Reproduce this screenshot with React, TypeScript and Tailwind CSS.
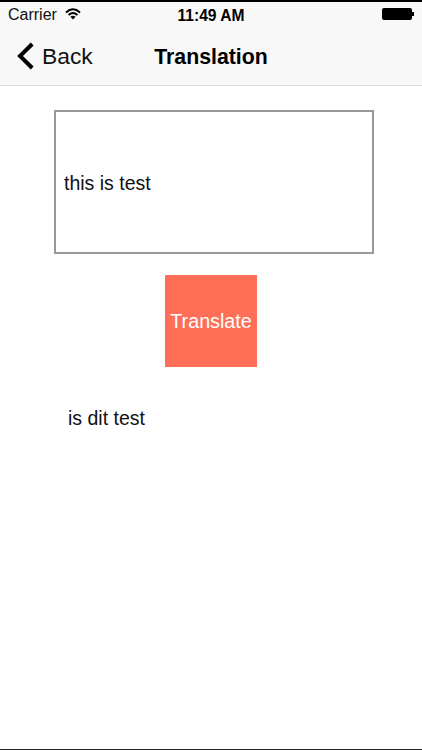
export default function App() {
  return (
    <div className="w-[422px] h-[750px] bg-white flex flex-col overflow-hidden font-['Liberation_Sans',Arial,sans-serif] text-black">
      <div className="h-[86px] shrink-0 bg-[#f8f8f8] border-t-[2px] border-t-black border-b border-b-[#dcdcdc] flex flex-col">
        <div className="h-[27px] shrink-0 relative flex items-center justify-center">
          <div className="absolute left-[8px] top-[3px] flex items-center gap-[8px]">
            <span className="text-[16px] leading-[20px] text-[#111]">Carrier</span>
            <svg width="16" height="12" viewBox="0 0 16 12" className="mt-[-3px]">
              <path d="M1 4.4 Q8 -1.8 15 4.4" fill="none" stroke="#000" strokeWidth="2" />
              <path d="M3.6 7 Q8 3 12.4 7" fill="none" stroke="#000" strokeWidth="2" />
              <path d="M5.4 8.8 Q8 6.8 10.6 8.8 L8 11.6 Z" fill="#000" />
            </svg>
          </div>
          <span className="text-[15.6px] leading-[20px] font-bold">11:49 AM</span>
          <div className="absolute left-[382px] top-[6px] flex items-center">
            <div className="w-[30px] h-[12px] bg-black rounded-[2px]" />
            <div className="w-[2px] h-[4px] bg-black" />
          </div>
        </div>
        <div className="flex-1 relative flex items-center justify-center">
          <div className="absolute left-[17px] top-[13px] flex items-center gap-[8px]">
            <svg width="17" height="28" viewBox="0 0 17 28">
              <path d="M15.2 2 L3 14 L15.2 26" fill="none" stroke="#000" strokeWidth="4" />
            </svg>
            <span className="text-[22.8px] leading-[28px] text-[#111]">Back</span>
          </div>
          <span className="text-[21.3px] leading-[28px] font-bold">Translation</span>
        </div>
      </div>
      <div className="flex-1 flex flex-col items-start">
        <div className="w-[320px] h-[144px] mt-[24px] ml-[54px] border-2 border-[#999] flex items-center pl-[8px]">
          <span className="text-[19.5px] leading-[24px] text-[#111] mt-[2px]">this is test</span>
        </div>
        <button className="w-[92px] h-[92px] mt-[21px] ml-[165px] pt-[2px] bg-[#ff6f57] text-white text-[19.7px] flex items-center justify-center">
          Translate
        </button>
        <div className="pl-[68px] mt-[39px] text-[19.5px] leading-[24px] text-[#111]">is dit test</div>
      </div>
      <div className="h-[1px] shrink-0 bg-[#222]" />
    </div>
  );
}
